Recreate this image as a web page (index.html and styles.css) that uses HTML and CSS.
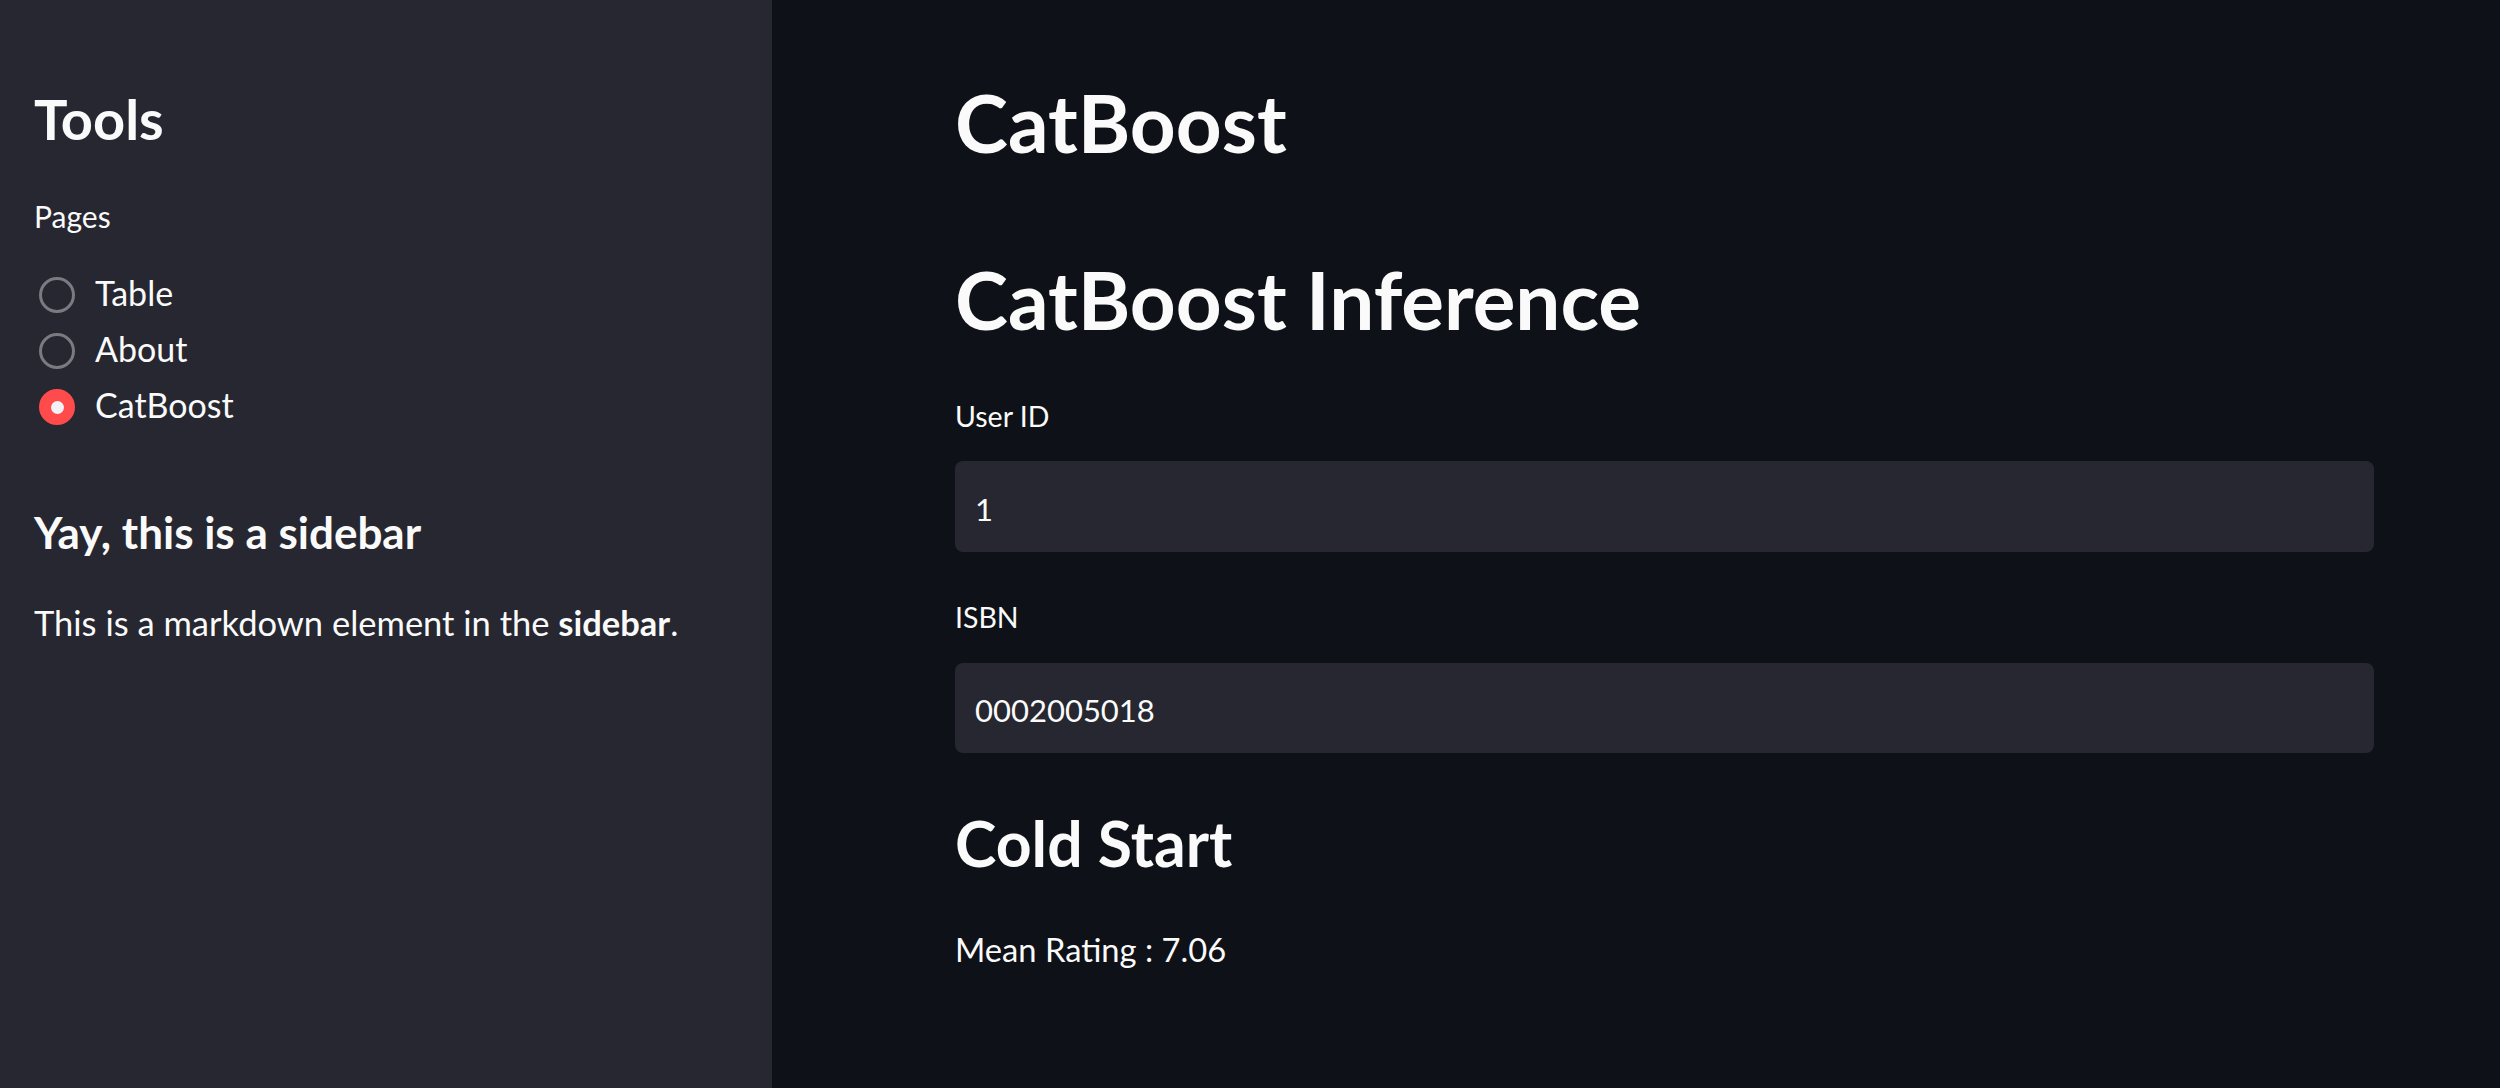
FILE: index.html
```html
<!DOCTYPE html>
<html lang="en">
<head>
<meta charset="utf-8">
<title>CatBoost</title>
<link rel="stylesheet" href="styles.css">
</head>
<body>
<div class="app">
  <aside class="sidebar">
    <h1 class="sb-title">Tools</h1>
    <div class="radio-group">
      <div class="radio-label">Pages</div>
      <label class="radio"><span class="radio-dot"></span><span class="radio-text">Table</span></label>
      <label class="radio"><span class="radio-dot"></span><span class="radio-text">About</span></label>
      <label class="radio"><span class="radio-dot is-checked"></span><span class="radio-text">CatBoost</span></label>
    </div>
    <h2 class="sb-header">Yay, this is a sidebar</h2>
    <p class="sb-text">This is a markdown element in the <strong>sidebar</strong>.</p>
  </aside>
  <main class="main">
    <div class="block">
      <h1 class="title">CatBoost</h1>
      <h2 class="header">CatBoost Inference</h2>
      <div class="field field-first">
        <label class="field-label" for="uid">User ID</label>
        <input class="field-input" id="uid" type="text" value="1" readonly>
      </div>
      <div class="field">
        <label class="field-label" for="isbn">ISBN</label>
        <input class="field-input field-input-2" id="isbn" type="text" value="0002005018" readonly>
      </div>
      <h3 class="subheader">Cold Start</h3>
      <p class="body-text">Mean Rating : 7.06</p>
    </div>
  </main>
</div>
</body>
</html>
```

FILE: styles.css
```css
* { box-sizing: border-box; }
html, body { margin: 0; padding: 0; height: 100%; }
body {
  background: #0e1117;
  color: #fafafa;
  font-family: "Source Sans Pro", Lato, "Noto Sans", sans-serif;
}
.app {
  display: flex;
  min-height: 100vh;
}
.sidebar {
  width: 772px;
  flex: 0 0 772px;
  background: #262730;
  padding: 88px 34px 0 34px;
}
.sb-title {
  margin: 0;
  font-size: 56px;
  line-height: 62px;
  font-weight: 700;
}
.radio-group {
  margin-top: 48px;
  display: flex;
  flex-direction: column;
}
.radio-label {
  font-size: 30px;
  line-height: 36px;
  margin-bottom: 33px;
}
.radio {
  display: flex;
  align-items: center;
  height: 56px;
  padding-left: 5px;
  gap: 20px;
  font-size: 34px;
  line-height: 44px;
}
.radio-text { margin-bottom: 4px; }
.radio-dot {
  width: 36px;
  height: 36px;
  border-radius: 50%;
  border: 3.5px solid #7a7b81;
  display: flex;
  align-items: center;
  justify-content: center;
  flex: 0 0 36px;
}
.radio-dot.is-checked {
  background: #ff4b4b;
  border-color: #ff4b4b;
}
.radio-dot.is-checked::after {
  content: "";
  width: 13px;
  height: 13px;
  border-radius: 50%;
  background: #f0f2f6;
}
.sb-header {
  margin: 69px 0 0 0;
  font-size: 44px;
  line-height: 56px;
  font-weight: 700;
}
.sb-text {
  margin: 39px 0 0 0;
  font-size: 34.5px;
  line-height: 48px;
}
.sb-text strong { font-weight: 700; }

.main {
  flex: 1 1 auto;
  padding: 72px 0 0 183px;
}
.block {
  width: 1419px;
  display: flex;
  flex-direction: column;
}
.title, .header {
  margin: 0;
  font-size: 80px;
  line-height: 100px;
  font-weight: 700;
}
.header { margin-top: 77px; }
.field {
  margin-top: 47px;
  display: flex;
  flex-direction: column;
}
.field-first { margin-top: 49px; }
.field-label {
  font-size: 28.5px;
  line-height: 36px;
  margin-bottom: 27px;
}
.field + .field .field-label { margin-bottom: 28px; }
.field-input {
  height: 91px;
  width: 100%;
  background: #262730;
  border: none;
  border-radius: 8px;
  color: #fafafa;
  font-family: inherit;
  font-size: 31px;
  padding: 4px 20px 0 20px;
  outline: none;
}
.field-input-2 { height: 90px; }
.subheader {
  margin: 50px 0 0 0;
  font-size: 62.5px;
  line-height: 80px;
  font-weight: 700;
}
.body-text {
  margin: 43px 0 0 0;
  font-size: 32.7px;
  line-height: 48px;
}
```
